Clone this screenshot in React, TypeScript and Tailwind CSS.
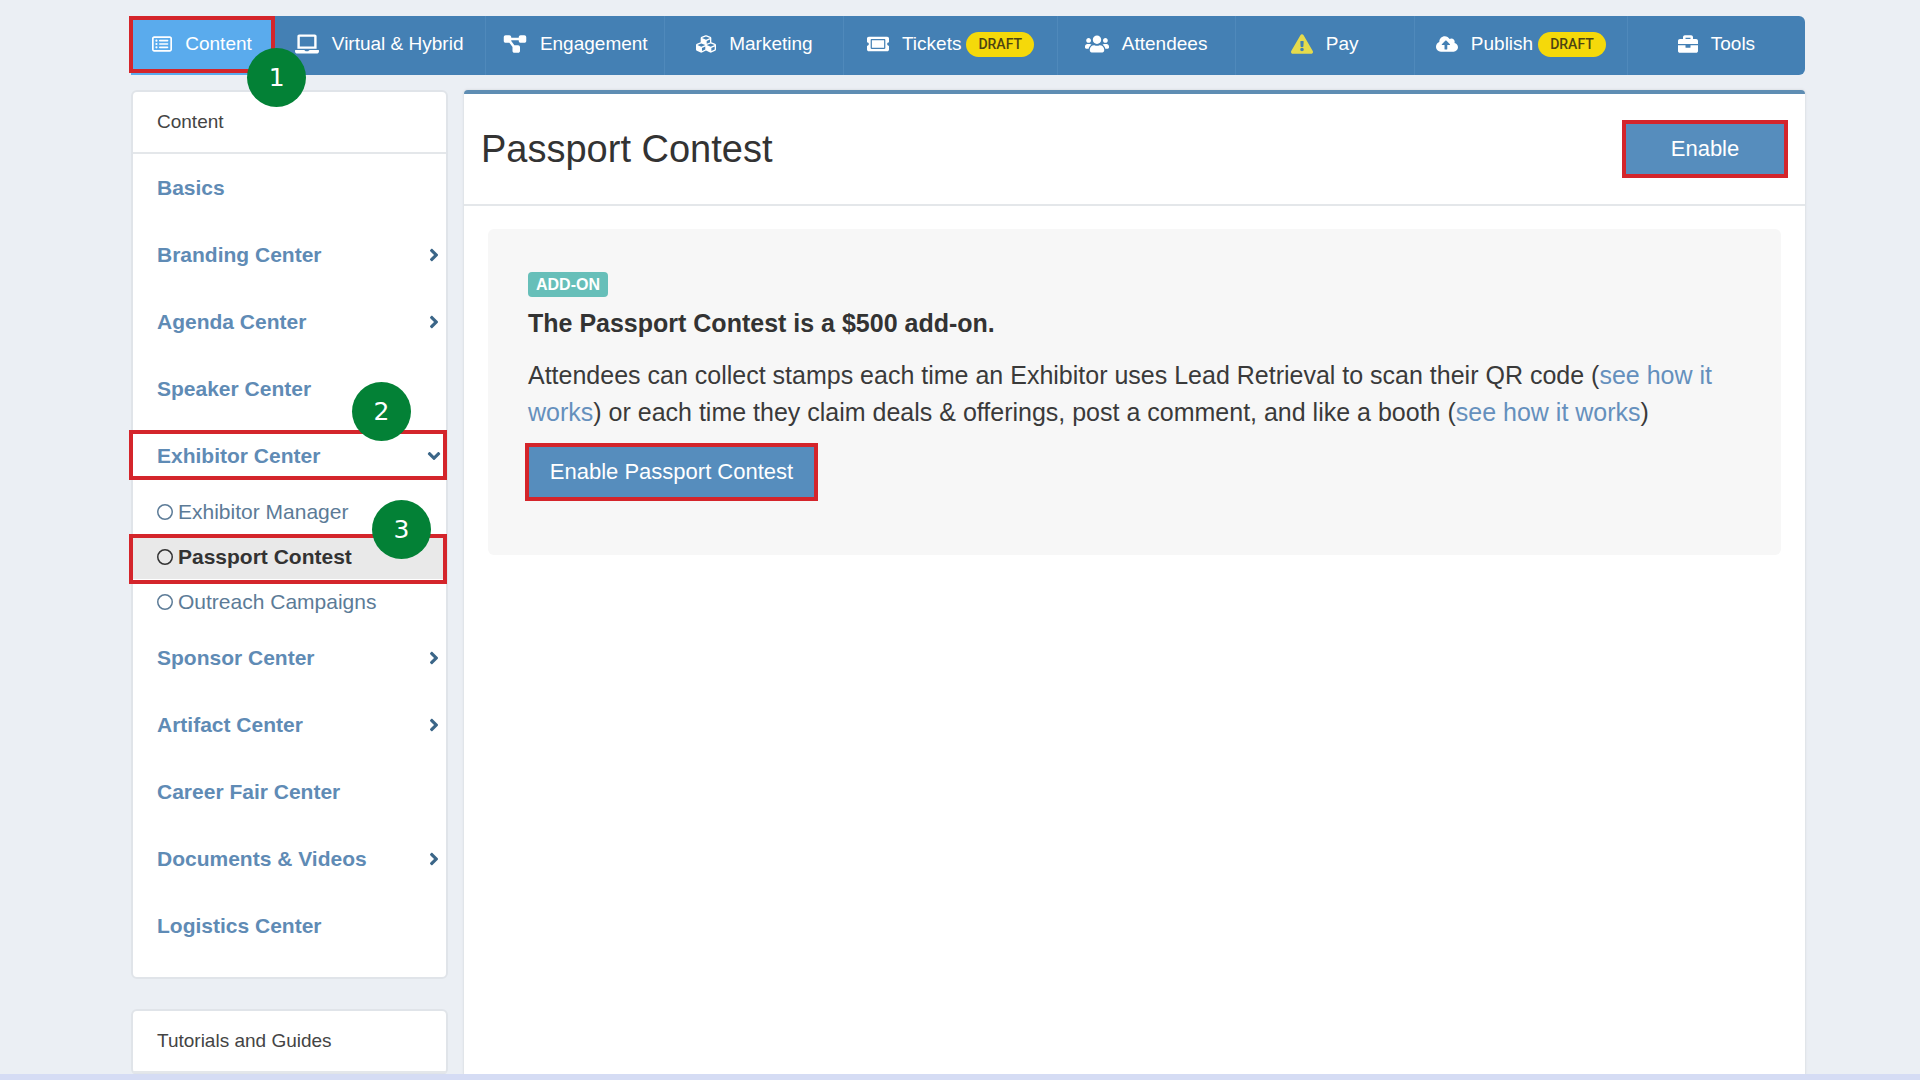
import type { ReactNode } from "react"
import type { IconType } from "react-icons"
import {
  FaAngleDown,
  FaAngleRight,
  FaBriefcase,
  FaCloudUploadAlt,
  FaCubes,
  FaExclamationTriangle,
  FaLaptop,
  FaTicketAlt,
  FaUsers,
} from "react-icons/fa"
import { FaDiagramProject, FaRegCircle, FaRegRectangleList } from "react-icons/fa6"
import clsx from "clsx"

interface NavItem {
  label: string
  icon: IconType
  iconClass: string
  draft?: boolean
}

const NAV_ITEMS: NavItem[] = [
  { label: "Content", icon: FaRegRectangleList, iconClass: "size-5" },
  { label: "Virtual & Hybrid", icon: FaLaptop, iconClass: "h-5 w-6" },
  { label: "Engagement", icon: FaDiagramProject, iconClass: "h-5 w-6" },
  { label: "Marketing", icon: FaCubes, iconClass: "size-5" },
  { label: "Tickets", icon: FaTicketAlt, iconClass: "size-[22px]", draft: true },
  { label: "Attendees", icon: FaUsers, iconClass: "size-6" },
  { label: "Pay", icon: FaExclamationTriangle, iconClass: "size-[22px] text-[#e6db4c]" },
  { label: "Publish", icon: FaCloudUploadAlt, iconClass: "size-[22px]", draft: true },
  { label: "Tools", icon: FaBriefcase, iconClass: "size-5" },
]

interface SideItem {
  label: string
  arrow?: boolean
  children?: string[]
}

const SIDE_ITEMS: SideItem[] = [
  { label: "Basics" },
  { label: "Branding Center", arrow: true },
  { label: "Agenda Center", arrow: true },
  { label: "Speaker Center" },
  {
    label: "Exhibitor Center",
    arrow: true,
    children: ["Exhibitor Manager", "Passport Contest", "Outreach Campaigns"],
  },
  { label: "Sponsor Center", arrow: true },
  { label: "Artifact Center", arrow: true },
  { label: "Career Fair Center" },
  { label: "Documents & Videos", arrow: true },
  { label: "Logistics Center" },
]

const ACTIVE_CHILD = "Passport Contest"

// Numbered walkthrough marker that sits over the highlighted control.
function Step({ n, className }: { n: number; className: string }) {
  return (
    <span
      className={clsx(
        "absolute z-20 flex size-[59px] items-center justify-center rounded-full bg-[#038136] font-['DejaVu_Sans',sans-serif] text-[25px] leading-none text-white",
        className
      )}
    >
      {n}
    </span>
  )
}

// Red frame laid over the highlighted control.
function Frame({ className }: { className: string }) {
  return <span className={clsx("pointer-events-none absolute z-10 border-4 border-[#d4252b]", className)} />
}

function TopNav() {
  return (
    <nav className="grid h-[59px] grid-cols-[142fr_212fr_179fr_179fr_213fr_178fr_179fr_213fr_178fr] rounded-md bg-[#4480b4]">
      {NAV_ITEMS.map((item, index) => {
        const Icon = item.icon
        const active = index === 0
        return (
          <div
            key={item.label}
            className={clsx("relative", active ? "bg-[#5aabed]" : index > 1 && "border-l border-[#4f89bb]")}
          >
            <a
              href="#"
              className="flex h-full items-center justify-center pb-[3px] text-[19px] leading-6 whitespace-nowrap text-white"
            >
              <Icon className={clsx("mr-[13px] shrink-0", item.iconClass)} />
              {item.label}
              {item.draft && (
                <span className="ml-[5px] flex h-[25px] items-center rounded-full bg-[#f5d90a] px-3 font-['Roboto',sans-serif] text-sm font-medium text-[#4d4413]">
                  DRAFT
                </span>
              )}
            </a>
            {active && (
              <>
                <Frame className="-inset-x-0.5 top-0 bottom-0.5" />
                <Step n={1} className="top-8 -right-[33px]" />
              </>
            )}
          </div>
        )
      })}
    </nav>
  )
}

function Panel({ title, children }: { title: string; children?: ReactNode }) {
  return (
    <section className="rounded-md border-2 border-[#e0e4e9] bg-white">
      <h2 className="flex h-[62px] items-center border-b-2 border-[#e4e7ea] px-6 text-[19px] text-[#444]">
        {title}
      </h2>
      {children}
    </section>
  )
}

function SideMenu() {
  return (
    <ul className="pb-[18px]">
      {SIDE_ITEMS.map((item) => {
        const Arrow = item.children ? FaAngleDown : FaAngleRight
        return (
          <li key={item.label}>
            <div className="relative">
              <a
                href="#"
                className="flex h-[67px] items-center justify-between pr-0.5 pl-6 text-[21px] font-bold text-[#5f8bb5]"
              >
                {item.label}
                {item.arrow && <Arrow className="size-5 text-[#3b6688]" />}
              </a>
              {item.children && (
                <>
                  <Frame className="top-2 -right-px -left-1 h-[50px]" />
                  <Step n={2} className="-top-10 right-[35px]" />
                </>
              )}
            </div>
            {item.children && (
              <ul>
                {item.children.map((child) => {
                  const active = child === ACTIVE_CHILD
                  return (
                    <li key={child} className="relative">
                      <a
                        href="#"
                        className={clsx(
                          "flex h-[45px] items-center gap-[5px] pl-6 text-[21px]",
                          active ? "bg-[#e9e9e9] font-bold text-[#333]" : "text-[#5c7b97]"
                        )}
                      >
                        <FaRegCircle className="size-4" />
                        {child}
                      </a>
                      {active && (
                        <>
                          <Frame className="top-0 -right-px -left-1 h-[50px]" />
                          <Step n={3} className="-top-[34px] right-[15px]" />
                        </>
                      )}
                    </li>
                  )
                })}
              </ul>
            )}
          </li>
        )
      })}
    </ul>
  )
}

function EnableButton({ className, children }: { className: string; children: ReactNode }) {
  return (
    <button
      type="button"
      className={clsx(
        "h-[58px] border-4 border-[#d4252b] bg-[#568dbd] text-[22px] leading-none text-white",
        className
      )}
    >
      {children}
    </button>
  )
}

export default function App() {
  return (
    <div className="flex h-screen flex-col overflow-hidden bg-[#ebeff4] font-['Liberation_Sans',Arial,sans-serif]">
      <div className="flex min-h-0 flex-1 flex-col gap-[15px] pt-4 pr-[115px] pl-[131px]">
        <TopNav />
        <div className="flex min-h-0 flex-1 gap-4">
          <aside className="flex w-[317px] shrink-0 flex-col gap-[30px]">
            <Panel title="Content">
              <SideMenu />
            </Panel>
            <Panel title="Tutorials and Guides" />
          </aside>

          <main className="flex-1 rounded-t-sm border-t-4 border-[#5e8db3] bg-white shadow-[0_0_2px_1px_#dde1e6]">
            <header className="flex h-28 items-center justify-between border-b-2 border-[#e4e7ea] px-[17px]">
              <h1 className="text-[38px] text-[#333]">Passport Contest</h1>
              <EnableButton className="w-[166px]">Enable</EnableButton>
            </header>

            <div className="mx-6 mt-[23px] rounded-md bg-[#f7f7f7] px-10 pt-[43px] pb-[54px] text-[25px] leading-[37px] text-[#3a3a3a]">
              <span className="flex h-[25px] w-fit items-center rounded-sm bg-[#67bfb9] px-2 text-base font-bold text-white">
                ADD-ON
              </span>
              <h2 className="mt-2 font-bold text-[#333]">The Passport Contest is a $500 add-on.</h2>
              <p className="mt-[15px]">
                Attendees can collect stamps each time an Exhibitor uses Lead Retrieval to scan their QR code (
                <a href="#" className="text-[#6590bd]">
                  see how it works
                </a>
                ) or each time they claim deals &amp; offerings, post a comment, and like a booth (
                <a href="#" className="text-[#6590bd]">
                  see how it works
                </a>
                )
              </p>
              <EnableButton className="mt-3 -ml-[3px] w-[293px]">Enable Passport Contest</EnableButton>
            </div>
          </main>
        </div>
      </div>
      {/* window edge along the bottom */}
      <div className="h-1.5 shrink-0 bg-[#d5dcf4]" />
    </div>
  )
}
